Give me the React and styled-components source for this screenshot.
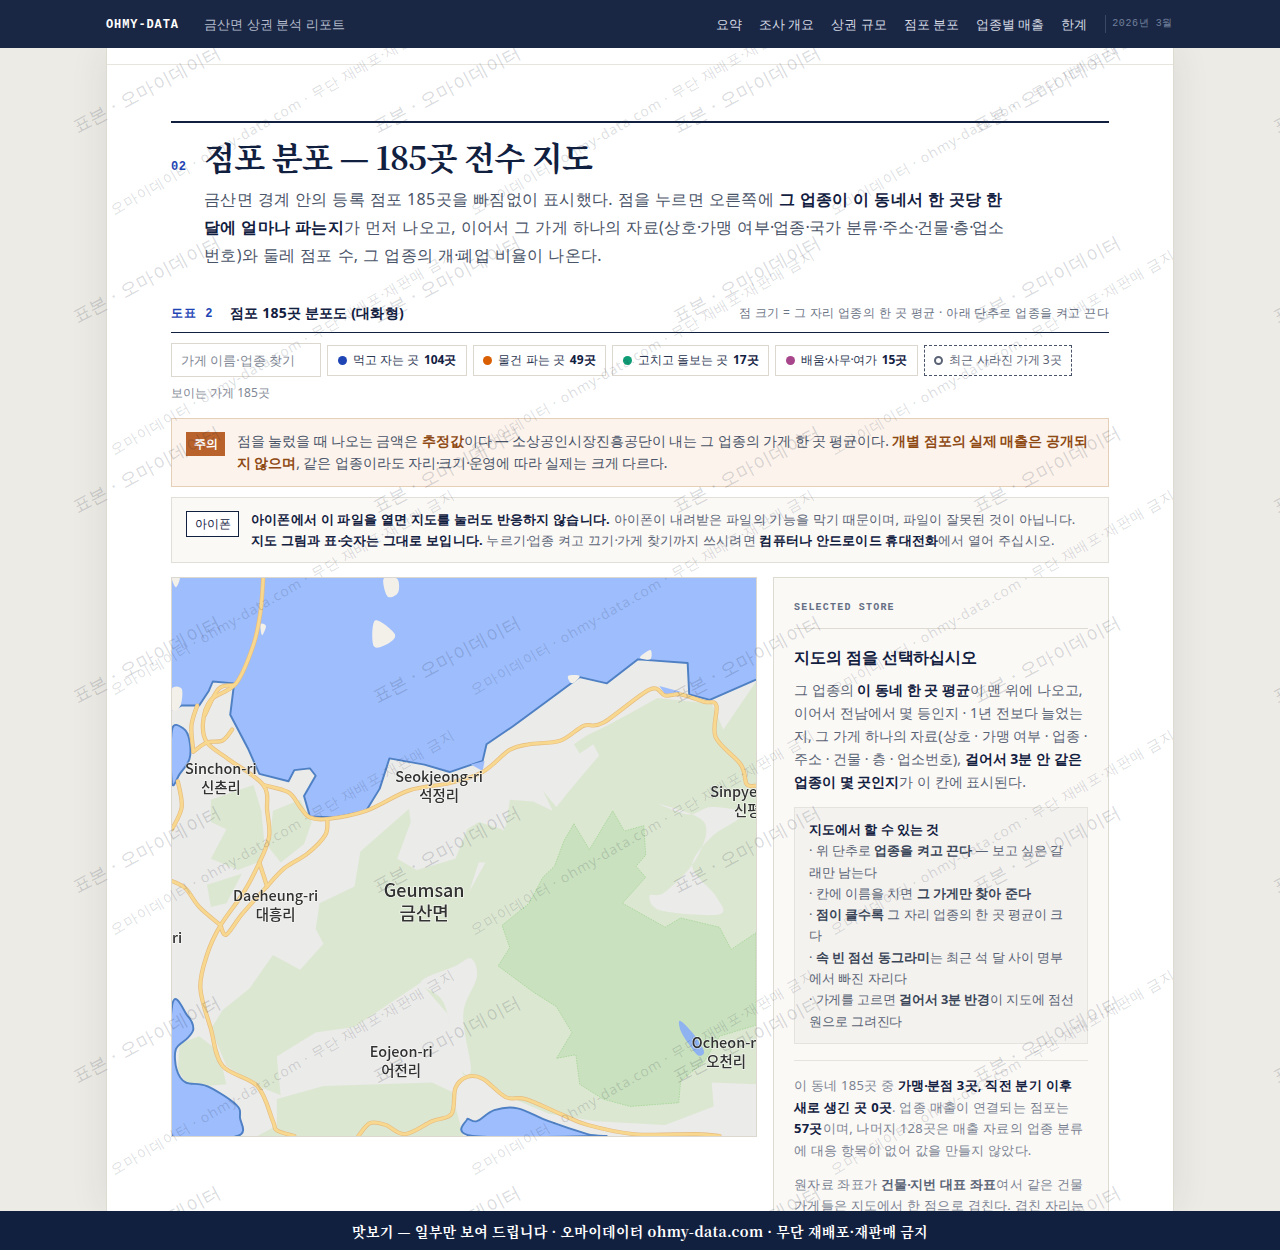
import styled, { createGlobalStyle } from "styled-components";

const SANS = `"Noto Sans", sans-serif`;
const SERIF = `"Noto Serif CJK KR", "Liberation Serif", serif`;
const MONO = `"Liberation Mono", monospace`;

const NAVY = "#1a2744";
const INK = "#12203f";

const navItems = ["요약", "조사 개요", "상권 규모", "점포 분포", "업종별 매출", "한계"];

const chips = [
  { label: "먹고 자는 곳", count: "104곳", color: "#1f45b5" },
  { label: "물건 파는 곳", count: "49곳", color: "#d95f02" },
  { label: "고치고 돌보는 곳", count: "17곳", color: "#0f9d76" },
  { label: "배움·사무·여가", count: "15곳", color: "#a8468c" },
];

// middle dots sit tighter than the font's own advance
const dots = (text) =>
  text.split("·").flatMap((part, i) => (i === 0 ? [part] : [<MidDot key={i}>·</MidDot>, part]));

// smooth line through points (catmull-rom), coords are in map-drawing units
const smooth = (pts, close) => {
  const n = pts.length;
  const at = (i) => (close ? pts[(i + n) % n] : pts[Math.max(0, Math.min(n - 1, i))]);
  let d = `M${pts[0][0]},${pts[0][1]}`;
  const last = close ? n : n - 1;
  for (let i = 0; i < last; i++) {
    const [p0, p1, p2, p3] = [at(i - 1), at(i), at(i + 1), at(i + 2)];
    const c1 = [p1[0] + (p2[0] - p0[0]) / 6, p1[1] + (p2[1] - p0[1]) / 6];
    const c2 = [p2[0] - (p3[0] - p1[0]) / 6, p2[1] - (p3[1] - p1[1]) / 6];
    d += `C${c1[0]},${c1[1]} ${c2[0]},${c2[1]} ${p2[0]},${p2[1]}`;
  }
  return close ? d + "Z" : d;
};

const poly = (pts) => "M" + pts.map((p) => p.join(",")).join("L") + "Z";

const coast = [
  [30, 378], [55, 365], [100, 365], [125, 325], [135, 300], [190, 305], [180, 390], [225, 480], [255, 550],
  [330, 570], [345, 540], [385, 535], [400, 555], [370, 610], [385, 665], [450, 668], [530, 650], [565, 590],
  [590, 508], [680, 525], [745, 545], [830, 515], [840, 470], [910, 420], [1000, 350], [1080, 288], [1150, 305],
  [1230, 240], [1358, 250], [1362, 335], [1415, 350], [1534, 295],
];

const waters = [
  [[30, 430], [60, 428], [75, 460], [75, 510], [50, 550], [30, 575]],
  [[30, 1180], [70, 1205], [85, 1240], [70, 1265], [40, 1295], [42, 1350], [65, 1385], [120, 1395], [195, 1445], [205, 1480], [198, 1530], [30, 1530]],
  [[790, 1485], [815, 1490], [860, 1460], [920, 1455], [1000, 1490], [1100, 1525], [1130, 1530], [805, 1530]],
];

const islands = [
  [[575, 22], [610, 22], [612, 60], [585, 70]],
  [[553, 135], [603, 170], [590, 195], [550, 205]],
  [[258, 145], [272, 150], [262, 175]],
  [[30, 20], [50, 20], [40, 45]],
  [[30, 320], [55, 320], [52, 365], [30, 378]],
  [[1235, 235], [1262, 215], [1262, 240]],
  [[1050, 285], [1080, 285], [1060, 305]],
];

const forests = [
  [[1280, 345], [1420, 360], [1450, 430], [1534, 300], [1534, 1390], [1420, 1385], [1425, 1450], [1300, 1500], [1120, 1490], [1000, 1470], [890, 1420], [830, 1370], [780, 1365], [740, 1200], [670, 1115], [500, 1235], [400, 1250], [300, 1315], [310, 1420], [250, 1395], [170, 1340], [130, 1240], [160, 1190], [230, 1130], [290, 1040], [360, 1080], [420, 1010], [400, 970], [410, 900], [500, 855], [515, 760], [640, 645], [645, 680], [610, 780], [660, 810], [760, 780], [790, 700], [820, 680], [880, 700], [920, 810], [880, 790], [820, 790], [795, 870], [890, 690], [900, 620], [960, 625], [1010, 650], [985, 595], [1020, 640], [1050, 600], [1130, 500], [1115, 470], [1080, 495], [1065, 470], [1100, 445], [1150, 420], [1220, 380]],
  [[130, 620], [240, 580], [260, 650], [270, 760], [250, 790], [200, 810], [130, 780], [170, 700], [130, 680]],
  [[290, 650], [360, 620], [390, 680], [370, 740], [310, 790], [280, 750]],
  [[120, 850], [210, 820], [170, 900], [130, 910]],
  [[50, 1280], [100, 1260], [150, 1300], [170, 1390], [120, 1395], [65, 1385], [45, 1350]],
  [[250, 1530], [320, 1490], [350, 1530]],
  [[300, 1430], [420, 1395], [700, 1385], [750, 1410], [780, 1530], [300, 1530]],
  [[800, 1050], [880, 1220], [1000, 1300], [900, 1400], [820, 1340], [790, 1200]],
];

const clearings = [
  [[1280, 630], [1400, 680], [1380, 780], [1300, 870], [1260, 880], [1290, 920], [1440, 930], [1430, 880], [1370, 800], [1420, 720], [1500, 660], [1420, 640], [1360, 660]],
  [[800, 1050], [815, 1100], [780, 1200], [800, 1350], [770, 1340], [730, 1170], [670, 1115], [760, 1070]],
];

const bigForest = [
  [1065, 685], [1105, 755], [1165, 650], [1195, 705], [1245, 690], [1250, 770], [1225, 800], [1250, 830], [1190, 900],
  [1300, 965], [1340, 940], [1440, 965], [1470, 1025], [1534, 980], [1534, 1230], [1440, 1260], [1400, 1330], [1340, 1380],
  [1335, 1440], [1210, 1450], [1140, 1430], [1080, 1390], [1070, 1310], [1020, 1320], [1060, 1250], [1020, 1180], [960, 1140],
  [870, 1070], [900, 1020], [880, 960], [950, 900], [985, 830], [1015, 800], [1040, 730],
];

const roads = [
  [[265, 20], [258, 110], [240, 200], [195, 305], [130, 350], [110, 410], [120, 465], [175, 510], [265, 580], [275, 650], [280, 720], [255, 790], [215, 870], [155, 960], [120, 1040], [103, 1130], [130, 1240], [160, 1340], [250, 1395], [290, 1490], [300, 1515], [345, 1530]],
  [[265, 580], [330, 600], [360, 640], [385, 668], [430, 672], [530, 650], [640, 595], [745, 575], [830, 545], [900, 485], [950, 470], [1030, 460], [1090, 420], [1140, 412], [1260, 322], [1300, 338], [1340, 335], [1400, 355], [1432, 365], [1430, 450], [1495, 525], [1510, 578], [1534, 582]],
  [[430, 672], [425, 715], [380, 765], [320, 805], [270, 860], [210, 930], [170, 985], [155, 960]],
  [[255, 790], [275, 855]],
  [[30, 840], [65, 860], [100, 910], [155, 960]],
  [[85, 490], [80, 420], [95, 365]],
  [[85, 490], [120, 465], [160, 460], [185, 430]],
  [[45, 570], [55, 640], [30, 700]],
  [[190, 310], [150, 320], [115, 390]],
  [[510, 1530], [540, 1495], [580, 1500], [630, 1525], [700, 1490], [750, 1470], [760, 1400], [790, 1370], [830, 1375], [890, 1425], [940, 1430], [1030, 1470], [1100, 1500], [1220, 1525], [1380, 1525], [1440, 1530]],
];

const places = [
  { x: 49, y: 197, name: "Sinchon-ri", ko: "신촌리" },
  { x: 268, y: 205, name: "Seokjeong-ri", ko: "석정리" },
  { x: 104, y: 324, name: "Daeheung-ri", ko: "대흥리" },
  { x: 253, y: 320, name: "Geumsan", ko: "금산면", big: true },
  { x: 230, y: 481, name: "Eojeon-ri", ko: "어전리" },
  { x: 540, y: 220, name: "Sinpyeong-ri", ko: "신평리", start: true },
  { x: 556, y: 472, name: "Ocheon-ri", ko: "오천리" },
];

const MapDrawing = () => (
  <MapSvg viewBox="0 0 586 560" preserveAspectRatio="none" aria-label="금산면 지도">
    <defs>
      <filter id="soft" x="0" y="0" width="100%" height="100%">
        <feGaussianBlur stdDeviation="0.35" />
      </filter>
    </defs>
    <g filter="url(#soft)">
      <rect width="586" height="560" fill="#ebebe9" />
      <g transform={`scale(${586 / 1504} ${560 / 1510}) translate(-30 -20)`}>
        {forests.map((f, i) => (
          <path key={i} d={poly(f)} fill="#dce7d2" />
        ))}
        {clearings.map((f, i) => (
          <path key={i} d={smooth(f, true)} fill="#ebebe9" />
        ))}
        <path d={poly(bigForest)} fill="#c9e1bf" stroke="#9fd48f" strokeWidth="2" strokeDasharray="4 3" />
        <path d={poly([[30, 20], [1534, 20], ...coast.slice().reverse()])} fill="#9dbdfc" />
        <polyline points={coast.map((p) => p.join(",")).join(" ")} fill="none" stroke="#4f80c4" strokeWidth="5" strokeLinejoin="round" />
        {waters.map((w, i) => (
          <path key={i} d={smooth(w, true)} fill="#9dbdfc" stroke="#4f80c4" strokeWidth="5" />
        ))}
        <path d={smooth([[1338, 1218], [1370, 1250], [1400, 1300], [1385, 1312], [1360, 1280], [1340, 1245]], true)} fill="#8fb2f0" />
        <path d={poly([[1285, 312], [1340, 328], [1300, 335]])} fill="#9dbdfc" />
        <path d={poly([[800, 525], [835, 515], [830, 542]])} fill="#9dbdfc" />
        {islands.map((w, i) => (
          <path key={i} d={smooth(w, true)} fill="#f3f0ea" />
        ))}
        {roads.map((r, i) => (
          <path key={i} d={smooth(r)} fill="none" stroke="#e6bd80" strokeWidth="11" strokeLinecap="round" />
        ))}
        {roads.map((r, i) => (
          <path key={i} d={smooth(r)} fill="none" stroke="#f8d88f" strokeWidth="7.5" strokeLinecap="round" />
        ))}
      </g>
      {places.map((p) => (
        <PlaceLabel key={p.name} x={p.x} y={p.y} $big={p.big} textAnchor={p.start ? "start" : "middle"}>
          <tspan x={p.x}>{p.name}</tspan>
          <tspan x={p.start ? p.x + 24 : p.x} dy={p.big ? 23 : 19}>
            {p.ko}
          </tspan>
        </PlaceLabel>
      ))}
      <PlaceLabel x={0} y={366} textAnchor="start">
        ri
      </PlaceLabel>
    </g>
  </MapSvg>
);

const wmPage = [];
for (let row = 0; row < 7; row++) {
  for (let col = 0; col < 5; col++) {
    wmPage.push({ left: 78 + col * 300, top: 135 - 48 + row * 190 });
  }
}

const wmPaper = [];
for (let row = 0; row < 6; row++) {
  for (let col = -1; col < 4; col++) {
    wmPaper.push({ left: 8 + col * 360, top: 217 - 48 - 240 + row * 240 });
  }
}

const App = () => (
  <>
    <GlobalStyle />
    <Shell>
      <Header>
        <Brand>OHMY-DATA</Brand>
        <ReportName>금산면 상권 분석 리포트</ReportName>
        <Nav>
          {navItems.map((item) => (
            <NavLink key={item}>{item}</NavLink>
          ))}
        </Nav>
        <IssueDate>2026년 3월</IssueDate>
      </Header>

      <Stage>
        <Paper>
          <PrevRule />
          <Section>
            <SectionHead>
              <SectionNo>02</SectionNo>
              <SectionTitle>점포 분포 — 185곳 전수 지도</SectionTitle>
            </SectionHead>
            <Intro>
              금산면 경계 안의 등록 점포 185곳을 빠짐없이 표시했다. 점을 누르면 오른쪽에{" "}
              <strong>그 업종이 이 동네서 한 곳당 한 달에 얼마나 파는지</strong>가 먼저 나오고, 이어서 그 가게 하나의{" "}
              {dots("자료(상호·가맹 여부·업종·국가 분류·주소·건물·층·업소번호)와 둘레 점포 수, 그 업종의 개·폐업 비율이 나온다.")}
            </Intro>

            <FigureHead>
              <FigureNo>도표 2</FigureNo>
              <FigureTitle>점포 185곳 분포도 (대화형)</FigureTitle>
              <FigureNote>점 크기 = 그 자리 업종의 한 곳 평균 · 아래 단추로 업종을 켜고 끈다</FigureNote>
            </FigureHead>

            <Controls>
              <SearchBox placeholder="가게 이름·업종 찾기" />
              {chips.map((chip) => (
                <Chip key={chip.label}>
                  <Dot $color={chip.color} />
                  <span>
                    {dots(chip.label)} <b>{chip.count}</b>
                  </span>
                </Chip>
              ))}
              <Chip $dashed>
                <Ring />
                최근 사라진 가게 3곳
              </Chip>
            </Controls>
            <VisibleCount>보이는 가게 185곳</VisibleCount>

            <Notice $tone="warn">
              <WarnBadge>주의</WarnBadge>
              <NoticeText>
                점을 눌렀을 때 나오는 금액은 <WarnMark>추정값</WarnMark>이다 — 소상공인시장진흥공단이 내는 그 업종의 가게 한 곳
                평균이다. <WarnMark>개별 점포의 실제 매출은 공개되지 않으며</WarnMark>, 같은 업종이라도{" "}
                {dots("자리·크기·운영에 따라 실제는 크게 다르다.")}
              </NoticeText>
            </Notice>

            <Notice>
              <PhoneBadge>아이폰</PhoneBadge>
              <PhoneText>
                <strong>아이폰에서 이 파일을 열면 지도를 눌러도 반응하지 않습니다.</strong> 아이폰이 내려받은 파일의 기능을 막기
                때문이며, 파일이 잘못된 것이 아닙니다. <Semi>지도 그림과 {dots("표·숫자는")} 그대로 보입니다.</Semi>{" "}
                {dots("누르기·업종 켜고 끄기·가게 찾기까지")} 쓰시려면 <strong>컴퓨터나 안드로이드 휴대전화</strong>에서 열어 주십시오.
              </PhoneText>
            </Notice>

            <MapRow>
              <MapFrame>
                <MapDrawing />
              </MapFrame>
              <StorePanel>
                <PanelLabel>SELECTED STORE</PanelLabel>
                <PanelTitle>지도의 점을 선택하십시오</PanelTitle>
                <PanelText>
                  그 업종의 <strong>이 동네 한 곳 평균</strong>이 맨 위에 나오고, 이어서 전남에서 몇 등인지 · 1년 전보다
                  늘었는지, 그 가게 하나의 자료(상호 · 가맹 여부 · 업종 · 주소 · 건물 · 층 · 업소번호),{" "}
                  <strong>걸어서 3분 안 같은 업종이 몇 곳인지</strong>가 이 칸에 표시된다.
                </PanelText>
                <HelpBox>
                  <HelpTitle>지도에서 할 수 있는 것</HelpTitle>
                  <HelpLine>
                    · 위 단추로 <Semi>업종을 켜고 끈다</Semi> — 보고 싶은 갈
                    <br />
                    래만 남는다
                  </HelpLine>
                  <HelpLine>
                    · 칸에 이름을 치면 <Semi>그 가게만 찾아 준다</Semi>
                  </HelpLine>
                  <HelpLine>
                    · <Semi>점이 클수록</Semi> 그 자리 업종의 한 곳 평균이 크다
                  </HelpLine>
                  <HelpLine>
                    · <Semi>속 빈 점선 동그라미</Semi>는 최근 석 달 사이 명부에서 빠진 자리다
                  </HelpLine>
                  <HelpLine $tight>
                    · 가게를 고르면 <Semi>걸어서 3분 반경</Semi>이 지도에 점선 원으로 그려진다
                  </HelpLine>
                </HelpBox>
                <PanelRule />
                <PanelNote>
                  이 동네 185곳 중 <strong>{dots("가맹·분점")} 3곳, 직전 분기 이후 새로 생긴 곳 0곳</strong>. 업종 매출이 연결되는
                  점포는 <strong>57곳</strong>이며, 나머지 128곳은 매출 자료의 업종 분류에 대응 항목이 없어 값을 만들지 않았다.
                </PanelNote>
                <PanelNote>
                  원자료 좌표가 <Semi>{dots("건물·지번")} 대표 좌표</Semi>여서 같은 건물 가게들은 지도에서 한 점으로 겹친다. 겹친 자리는
                  숫자로 묶어 보인다.
                </PanelNote>
              </StorePanel>
            </MapRow>
          </Section>
          <WatermarkLayer>
            {wmPaper.map((w) => (
              <PaperMark key={`${w.left}-${w.top}`} style={{ left: w.left, top: w.top }}>
                오마이데이터 · ohmy-data.com · 무단 재배포·재판매 금지
              </PaperMark>
            ))}
          </WatermarkLayer>
        </Paper>
        <WatermarkLayer>
          {wmPage.map((w) => (
            <PageMark key={`${w.left}-${w.top}`} style={{ left: w.left, top: w.top }}>
              표본 · 오마이데이터
            </PageMark>
          ))}
        </WatermarkLayer>
      </Stage>

      <Footer>맛보기 — 일부만 보여 드립니다 · 오마이데이터 ohmy-data.com · 무단 재배포·재판매 금지</Footer>
    </Shell>
  </>
);

export default App;

const GlobalStyle = createGlobalStyle`
  html, body {
    margin: 0;
    height: 100%;
    overflow: hidden;
    background: #ecebe6;
    font-family: ${SANS};
    color: #4a5468;
  }
  * { box-sizing: border-box; }
`;

const MidDot = styled.span`
  letter-spacing: -1.3px;
`;

const Shell = styled.div`
  height: 100vh;
  display: flex;
  flex-direction: column;
  overflow: hidden;
`;

const Header = styled.header`
  flex: none;
  height: 48px;
  background: ${NAVY};
  display: flex;
  align-items: center;
  padding: 0 107px 0 106px;
  position: relative;
  z-index: 5;
`;

const Brand = styled.div`
  padding-top: 2px;
  font-family: ${MONO};
  font-weight: 700;
  font-size: 12px;
  letter-spacing: 0.9px;
  color: #fff;
`;

const ReportName = styled.div`
  margin-left: 25px;
  font-size: 13px;
  letter-spacing: 0.1px;
  color: #b4bccd;
`;

const Nav = styled.nav`
  margin-left: auto;
  display: flex;
  gap: 17px;
`;

const NavLink = styled.span`
  font-size: 12.8px;
  color: #d5dae5;
`;

const IssueDate = styled.div`
  margin-left: 18px;
  padding-left: 6px;
  border-left: 1px solid #3b4865;
  font-family: ${MONO};
  font-size: 10px;
  letter-spacing: 0.6px;
  line-height: 18px;
  color: #71809c;
`;

const Stage = styled.div`
  flex: 1;
  min-height: 0;
  position: relative;
  overflow: hidden;
`;

const Paper = styled.main`
  position: relative;
  width: 1068px;
  margin: 0 auto;
  height: 100%;
  overflow: hidden;
  background: #fff;
  border-left: 1px solid #dedbd3;
  border-right: 1px solid #dedbd3;
  box-shadow: 0 0 36px rgba(40, 40, 30, 0.09);
`;

const PrevRule = styled.div`
  height: 17px;
  border-bottom: 1px solid #e8e5de;
`;

const Section = styled.section`
  margin: 56px 64px 0;
  border-top: 2px solid ${INK};
  padding-top: 11px;
`;

const SectionHead = styled.div`
  display: flex;
  align-items: baseline;
`;

const SectionNo = styled.span`
  font-family: ${MONO};
  font-size: 12px;
  font-weight: 700;
  letter-spacing: 0.6px;
  color: #1f45b5;
  width: 33px;
  flex: none;
`;

const SectionTitle = styled.h2`
  margin: 0;
  font-family: ${SERIF};
  font-size: 32px;
  line-height: 44px;
  font-weight: 700;
  color: ${INK};
  letter-spacing: -0.7px;
`;

const Intro = styled.p`
  margin: 7px 0 0 33px;
  max-width: 806px;
  font-size: 16px;
  line-height: 28px;
  letter-spacing: 0.32px;
  word-spacing: 0.24px;
  color: #4a5468;
  strong {
    color: ${INK};
  }
`;

const FigureHead = styled.div`
  margin-top: 31px;
  display: flex;
  align-items: center;
  height: 33px;
  border-bottom: 1px solid ${INK};
  padding-bottom: 6px;
`;

const FigureNo = styled.span`
  width: 59px;
  flex: none;
  font-family: ${MONO};
  font-size: 12px;
  font-weight: 700;
  letter-spacing: 1px;
  color: #1f45b5;
`;

const FigureTitle = styled.span`
  font-size: 14px;
  font-weight: 700;
  letter-spacing: 0.2px;
  color: ${INK};
`;

const FigureNote = styled.span`
  margin-left: auto;
  font-size: 12px;
  letter-spacing: 0.4px;
  color: #6b7485;
`;

const Controls = styled.div`
  margin-top: 10px;
  display: flex;
  align-items: center;
  gap: 6px;
`;

const SearchBox = styled.input`
  width: 150px;
  height: 34px;
  padding: 0 9px;
  border: 1px solid #ddd8cf;
  background: transparent;
  font-family: ${SANS};
  font-size: 12.8px;
  outline: none;
  &::placeholder {
    color: #7f8794;
    opacity: 1;
  }
`;

const Chip = styled.div`
  height: 31px;
  display: flex;
  align-items: center;
  gap: 6px;
  padding: 0 9.5px;
  border: 1px ${({ $dashed }) => ($dashed ? "dashed #4a5468" : "solid #ddd8cf")};
  font-size: 12px;
  white-space: pre;
  color: ${({ $dashed }) => ($dashed ? "#5a6375" : "#2b3650")};
  b {
    color: ${INK};
    margin-left: 2px;
  }
`;

const Dot = styled.i`
  width: 9px;
  height: 9px;
  border-radius: 50%;
  background: ${({ $color }) => $color};
`;

const Ring = styled.i`
  width: 9px;
  height: 9px;
  border-radius: 50%;
  border: 2px solid #5a6375;
`;

const VisibleCount = styled.div`
  margin-top: 7px;
  font-size: 12px;
  line-height: 18px;
  color: #7f8794;
`;

const Notice = styled.div`
  margin-top: ${({ $tone }) => ($tone === "warn" ? "16px" : "10px")};
  display: flex;
  align-items: flex-start;
  padding: ${({ $tone }) => ($tone === "warn" ? "11px 14px 12px" : "11px 14px 11px")};
  background: ${({ $tone }) => ($tone === "warn" ? "#fbf3ec" : "#faf9f6")};
  border: 1px solid ${({ $tone }) => ($tone === "warn" ? "#e5cfb8" : "#e2dfd8")};
`;

const WarnBadge = styled.span`
  flex: none;
  margin: 2px 12px 0 0;
  width: 39px;
  height: 24px;
  display: flex;
  align-items: center;
  justify-content: center;
  background: #b9622b;
  color: #fff;
  font-size: 12px;
  font-weight: 700;
`;

const NoticeText = styled.p`
  margin: 0;
  font-size: 13.6px;
  line-height: 22px;
  letter-spacing: -0.05px;
  color: #4a5468;
`;

const WarnMark = styled.strong`
  color: #8f4a14;
`;

const PhoneBadge = styled.span`
  flex: none;
  margin: 2px 12px 0 0;
  width: 53px;
  height: 26px;
  display: flex;
  align-items: center;
  justify-content: center;
  border: 1px solid ${INK};
  background: #fff;
  color: ${INK};
  font-size: 12px;
`;

const PhoneText = styled.p`
  margin: 0;
  padding-right: 6px;
  font-size: 13px;
  line-height: 21px;
  letter-spacing: 0.2px;
  color: #5a6375;
  strong {
    color: ${INK};
  }
`;

const Semi = styled.strong`
  color: #3a4558;
`;

const MapRow = styled.div`
  margin-top: 14px;
  display: grid;
  grid-template-columns: 586px 336px;
  gap: 16px;
  align-items: start;
`;

const MapFrame = styled.div`
  height: 560px;
  border: 1px solid #ddd8cf;
  overflow: hidden;
`;

const MapSvg = styled.svg`
  display: block;
  width: 100%;
  height: 100%;
`;

const PlaceLabel = styled.text`
  font-family: "Noto Sans CJK KR", sans-serif;
  font-size: ${({ $big }) => ($big ? "18px" : "14.5px")};
  font-weight: 500;
  fill: #303030;
  stroke: rgba(255, 255, 255, 0.6);
  stroke-width: 1.5px;
  paint-order: stroke;
`;

const StorePanel = styled.aside`
  padding: 21px 20px 24px;
  background: #faf9f6;
  border: 1px solid #dedbd3;
`;

const PanelLabel = styled.div`
  font-family: ${MONO};
  font-size: 10px;
  font-weight: 700;
  letter-spacing: 1.2px;
  line-height: 18px;
  color: #667085;
  padding-bottom: 11px;
  border-bottom: 1px solid #dedbd3;
`;

const PanelTitle = styled.h3`
  margin: 15px 0 0;
  font-size: 16px;
  line-height: 26px;
  letter-spacing: -0.1px;
  font-weight: 700;
  color: ${INK};
`;

const PanelText = styled.p`
  margin: 8px 0 0;
  font-size: 14px;
  line-height: 23px;
  color: #5a6375;
  strong {
    color: ${INK};
  }
`;

const HelpBox = styled.div`
  margin-top: 14px;
  padding: 11px 12px 11px 14px;
  background: #f3f2ef;
  border: 1px solid #e5e3dd;
  font-size: 12.8px;
  line-height: 21.3px;
  color: #5a6375;
`;

const HelpTitle = styled.div`
  font-weight: 700;
  color: ${INK};
`;

const HelpLine = styled.div`
  letter-spacing: ${({ $tight }) => ($tight ? "-0.12px" : "0")};
`;

const PanelRule = styled.div`
  margin-top: 16px;
  border-top: 1px solid #e5e3dd;
`;

const PanelNote = styled.p`
  margin: 14px 0 0;
  font-size: 13px;
  line-height: 21.7px;
  letter-spacing: 0.25px;
  color: #7a8292;
  strong {
    color: ${INK};
  }
  ${Semi} {
    color: #5a6375;
  }
  & + & {
    margin-top: 12px;
  }
`;

const WatermarkLayer = styled.div`
  position: absolute;
  inset: 0;
  overflow: hidden;
  pointer-events: none;
  z-index: 3;
`;

const PageMark = styled.span`
  position: absolute;
  white-space: nowrap;
  line-height: 1;
  transform-origin: 0 100%;
  transform: translateY(-100%) rotate(-28deg);
  font-size: 18px;
  letter-spacing: 0.6px;
  color: rgba(30, 40, 60, 0.18);
`;

const PaperMark = styled.span`
  position: absolute;
  white-space: nowrap;
  line-height: 1;
  transform-origin: 0 100%;
  transform: translateY(-100%) rotate(-30deg);
  font-size: 14px;
  letter-spacing: 0.9px;
  color: rgba(30, 40, 60, 0.16);
`;

const Footer = styled.footer`
  flex: none;
  height: 39px;
  background: ${INK};
  color: #fff;
  display: flex;
  align-items: center;
  justify-content: center;
  font-family: ${SERIF};
  font-size: 14px;
  letter-spacing: 0.37px;
  font-weight: 700;
  position: relative;
  z-index: 5;
`;
